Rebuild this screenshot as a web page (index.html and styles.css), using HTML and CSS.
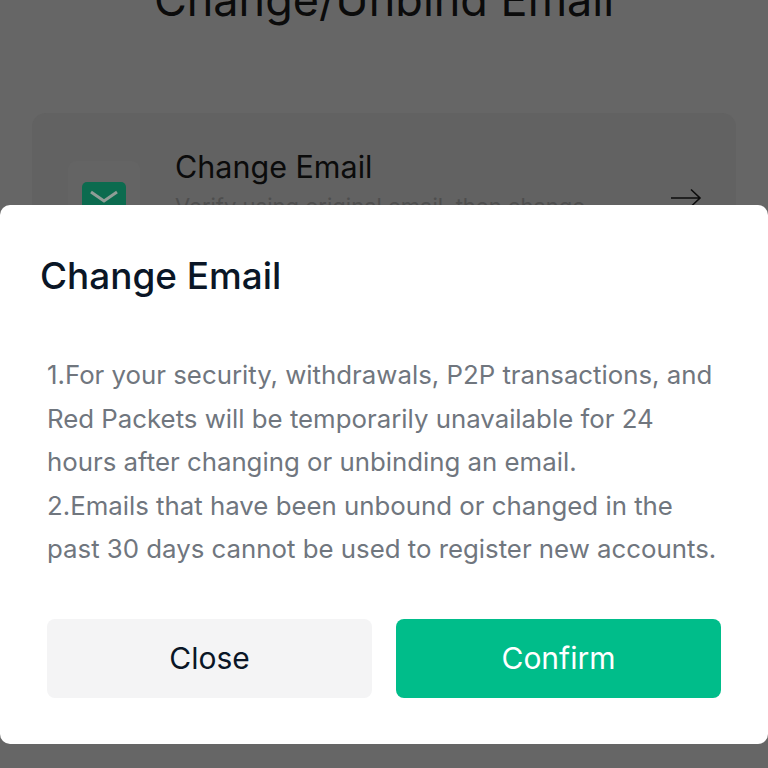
FILE: index.html
```html
<!DOCTYPE html>
<html lang="en">
<head>
<meta charset="utf-8">
<title>Change/Unbind Email</title>
<link rel="stylesheet" href="styles.css">
</head>
<body>
<main class="page">
  <h1 class="page-title">Change/Unbind Email</h1>
  <section class="card">
    <div class="card-icon">
      <svg viewBox="0 0 44 44" width="44" height="44" aria-hidden="true">
        <rect width="44" height="44" rx="5" fill="#0c6b4f"/>
        <path d="M9 10 L22 19 L35 10" fill="none" stroke="#8f9d97" stroke-width="3"/>
      </svg>
    </div>
    <div class="card-text">
      <div class="card-title">Change Email</div>
      <div class="card-sub">Verify using original email, then change</div>
    </div>
    <svg class="card-arrow" viewBox="0 0 32 20" width="32" height="20" aria-hidden="true">
      <path d="M1 10 H30 M21 1.5 L30 10 L21 18.5" fill="none" stroke="#0c0c0c" stroke-width="1.6"/>
    </svg>
  </section>
</main>
<div class="modal">
  <h2 class="modal-title">Change Email</h2>
  <div class="modal-body">
    <p>1.For your security, withdrawals, P2P transactions, and Red Packets will be temporarily unavailable for 24 hours after changing or unbinding an email.</p>
    <p>2.Emails that have been unbound or changed in the past 30 days cannot be used to register new accounts.</p>
  </div>
  <div class="modal-actions">
    <button class="btn btn-close">Close</button>
    <button class="btn btn-confirm">Confirm</button>
  </div>
</div>
</body>
</html>
```
FILE: styles.css
```css
* { box-sizing: border-box; }
html, body { margin: 0; height: 768px; overflow: hidden; }
body { position: relative; background: #666666; font-family: Inter, "Liberation Sans", sans-serif; }
.page { padding: 0 32px; }
.page-title {
  margin: -25px 0 0;
  text-align: center;
  font-size: 45px;
  line-height: 50px;
  font-weight: 400;
  color: #0b0b0b;
}
.card {
  margin-top: 88px;
  height: 200px;
  background: #626262;
  border-radius: 14px;
  display: flex;
  align-items: flex-start;
  padding: 36px 34px 0 36px;
}
.card-icon {
  width: 72px;
  height: 120px;
  padding: 21px 14px 0;
  margin-top: 12px;
  background: #646464;
  border-radius: 8px;
  flex: none;
}
.card-icon svg { display: block; }
.card-text { margin-left: 35px; flex: 1; }
.card-title { font-size: 30.5px; line-height: 36px; color: #0b0b0b; }
.card-sub { margin-top: 6px; font-size: 22px; line-height: 30px; color: #4e4e4e; }
.card-arrow { flex: none; margin-top: 39px; }
.modal {
  position: absolute;
  left: 0;
  right: 0;
  top: 205px;
  height: 539px;
  background: #ffffff;
  border-radius: 10px;
  padding: 46px 47px 0;
}
.modal-title {
  margin: 0 0 0 -7px;
  font-size: 36.9px;
  line-height: 50px;
  font-weight: 500;
  color: #0a1626;
}
.modal-body {
  margin-top: 52px;
  color: #70767e;
  font-size: 25.8px;
  line-height: 43.5px;
}
.modal-body p { margin: 0; }
.modal-actions { display: flex; gap: 24px; margin-top: 48px; width: 674px; }
.btn {
  flex: 1;
  height: 79px;
  border: 0;
  border-radius: 8px;
  font-family: inherit;
  font-size: 30px;
}
.btn-close { background: #f4f4f5; color: #0a1626; }
.btn-confirm { background: #00bd8a; color: #ffffff; }
```
